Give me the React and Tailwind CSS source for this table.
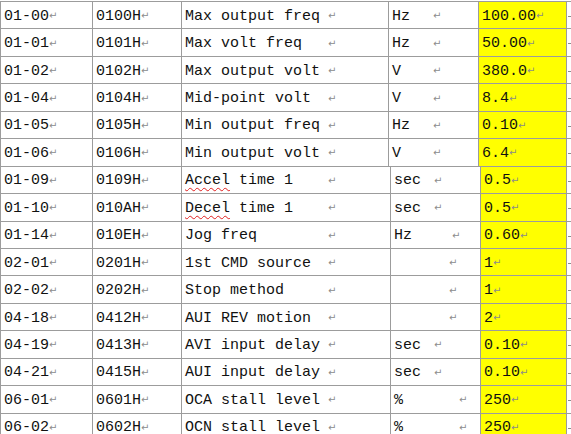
const topRows = [
  ['01-00', '0100H', 'Max output freq', 'Hz', '100.00'],
  ['01-01', '0101H', 'Max volt freq', 'Hz', '50.00'],
  ['01-02', '0102H', 'Max output volt', 'V', '380.0'],
  ['01-04', '0104H', 'Mid-point volt', 'V', '8.4'],
  ['01-05', '0105H', 'Min output freq', 'Hz', '0.10'],
  ['01-06', '0106H', 'Min output volt', 'V', '6.4'],
];

const bottomRows = [
  ['01-09', '0109H', 'Accel time 1', 'sec', '0.5', 'Accel'],
  ['01-10', '010AH', 'Decel time 1', 'sec', '0.5', 'Decel'],
  ['01-14', '010EH', 'Jog freq', 'Hz', '0.60'],
  ['02-01', '0201H', '1st CMD source', '', '1'],
  ['02-02', '0202H', 'Stop method', '', '1'],
  ['04-18', '0412H', 'AUI REV motion', '', '2'],
  ['04-19', '0413H', 'AVI input delay', 'sec', '0.10'],
  ['04-21', '0415H', 'AUI input delay', 'sec', '0.10'],
  ['06-01', '0601H', 'OCA stall level', '%', '250'],
  ['06-02', '0602H', 'OCN stall level', '%', '250'],
];

const unitMark = { Hz: 'w-[58px]', '%': 'w-[65px]', '': 'w-[55px]', sec: 'w-[40px]' };

function Mark() {
  return <span className="text-[10px] leading-none text-[#8c8c8c] font-['DejaVu_Sans',sans-serif]">↵</span>;
}

function Desc({ text, typo }) {
  if (!typo) return text;
  const rest = text.slice(typo.length);
  return (
    <>
      <span className="underline decoration-wavy decoration-[#e02020] decoration-1 underline-offset-[3px]">{typo}</span>
      {rest}
    </>
  );
}

function Row({ r, bottom }) {
  const cell = 'flex h-full items-center border-l border-[#9c9c9c] pl-[3px] pt-[2px]';
  return (
    <div className="flex h-[27.45px] border-t border-[#9c9c9c]">
      <div className={`${cell} w-[92px]`}>
        {r[0]}
        <Mark />
      </div>
      <div className={`${cell} w-[89px]`}>
        {r[1]}
        <Mark />
      </div>
      <div className={`${cell} ${bottom ? 'w-[209px]' : 'w-[207px]'}`}>
        <span className="inline-block w-[143px] whitespace-pre">
          <Desc text={r[2]} typo={r[5]} />
        </span>
        <Mark />
      </div>
      <div className={`${cell} w-[90px]`}>
        <span className={`inline-block whitespace-pre ${bottom ? unitMark[r[3]] : 'w-[41px]'}`}>{r[3]}</span>
        <Mark />
      </div>
      <div className={`${cell} ${bottom ? 'w-[87px]' : 'w-[89px]'} border-r bg-[#ffff00]`}>
        {r[4]}
        <Mark />
      </div>
      <div className="ml-[1px] mt-[14px] h-px w-[3px] bg-[#8c8c8c]" />
    </div>
  );
}

export default function App() {
  return (
    <div className="h-[434px] w-[571px] overflow-hidden bg-white pt-[1px] font-['Liberation_Mono',monospace] text-[15px] leading-none text-[#111]">
      {topRows.map((r) => (
        <Row key={r[0]} r={r} />
      ))}
      {bottomRows.map((r) => (
        <Row key={r[0]} r={r} bottom />
      ))}
    </div>
  );
}
